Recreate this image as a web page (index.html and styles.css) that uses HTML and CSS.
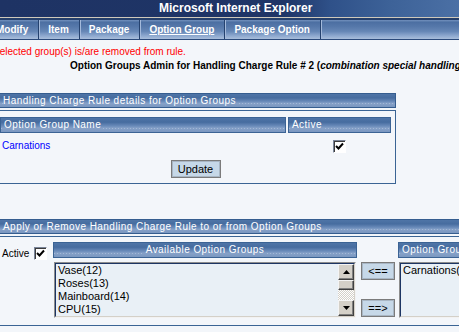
FILE: index.html
```html
<!DOCTYPE html>
<html lang="en">
<head>
<meta charset="utf-8">
<title>Option Groups Admin</title>
<link rel="stylesheet" href="styles.css">
</head>
<body>
<header class="titlebar">Microsoft Internet Explorer</header>
<nav class="nav">
  <a class="nav-item first" href="#">Modify</a><span class="sep"></span>
  <a class="nav-item" href="#">Item</a><span class="sep"></span>
  <a class="nav-item" href="#">Package</a><span class="sep"></span>
  <a class="nav-item current" href="#">Option Group</a><span class="sep"></span>
  <a class="nav-item" href="#">Package Option</a><span class="sep"></span>
</nav>
<main class="content">
  <p class="msg">Selected group(s) is/are removed from rule.</p>
  <h1 class="page-title">Option Groups Admin for Handling Charge Rule # 2 (<em>combination special handling</em>)</h1>

  <section class="panel panel-details">
    <div class="band"><span class="lbl">Handling Charge Rule details for Option Groups</span></div>
    <div class="box">
      <div class="grid grid-head">
        <div class="th"><span class="lbl">Option Group Name</span></div>
        <div class="th"><span class="lbl">Active</span></div>
      </div>
      <div class="grid grid-row">
        <a class="link" href="#">Carnations</a>
        <div class="center"><span class="check"><svg width="9" height="9" viewBox="0 0 9 9"><path d="M1 4 L3.5 6.5 L8 1.5" fill="none" stroke="#000" stroke-width="2"/></svg></span></div>
      </div>
      <div class="actions"><button class="btn btn-update" type="button">Update</button></div>
    </div>
  </section>

  <section class="panel panel-apply">
    <div class="band"><span class="lbl">Apply or Remove Handling Charge Rule to or from Option Groups</span></div>
    <div class="box box-apply">
      <div class="apply-grid">
        <div class="active-cell">Active <span class="check"><svg width="9" height="9" viewBox="0 0 9 9"><path d="M1 4 L3.5 6.5 L8 1.5" fill="none" stroke="#000" stroke-width="2"/></svg></span></div>
        <div class="th th-center"><span class="lbl">Available Option Groups</span></div>
        <div></div>
        <div class="th"><span class="lbl">Option Groups Assigned to this Rule</span></div>

        <div></div>
        <div class="listbox">
          <div class="listbox-inner">
            <ul class="options">
              <li>Vase(12)</li>
              <li>Roses(13)</li>
              <li>Mainboard(14)</li>
              <li>CPU(15)</li>
            </ul>
            <div class="scrollbar">
              <span class="sb-btn"><svg width="7" height="4" viewBox="0 0 7 4"><polygon points="3.5,0 7,4 0,4" fill="#000"/></svg></span>
              <span class="sb-thumb"></span>
              <span class="sb-track"></span>
              <span class="sb-btn"><svg width="7" height="4" viewBox="0 0 7 4"><polygon points="0,0 7,0 3.5,4" fill="#000"/></svg></span>
            </div>
          </div>
        </div>
        <div class="move-btns">
          <button class="btn btn-move" type="button">&lt;==</button>
          <button class="btn btn-move" type="button">==&gt;</button>
        </div>
        <div class="listbox listbox-right">
          <div class="listbox-inner">
            <ul class="options">
              <li>Carnations(11)</li>
            </ul>
          </div>
        </div>
      </div>
    </div>
  </section>
</main>
</body>
</html>
```
FILE: styles.css
```css
html { overflow: hidden; }
body {
  margin: 0;
  background: #f3f6fa;
  font-family: "Liberation Sans", Arial, sans-serif;
  color: #000;
}
* { box-sizing: border-box; }

.titlebar {
  height: 18px;
  border-bottom: 1px solid #cfc9bb;
  background: linear-gradient(to right, #1e3364 0, #1f3567 62%, #2f5189 72%, #3d6298 85%, #4b70a5 100%);
  color: #fff;
  font-weight: bold;
  font-size: 12px;
  line-height: 17px;
  padding-left: 159px;
  white-space: nowrap;
}

.nav {
  display: flex;
  height: 22px;
  border-top: 2px solid #253f6b;
  border-bottom: 1px solid #2b4a7b;
  background: linear-gradient(to bottom, #7391bd 0, #4c6fa2 12%, #5678aa 35%, #6687b6 60%, #8ca7ce 82%, #a9bedb 100%);
  font-size: 10px;
  font-weight: bold;
  line-height: 19px;
  white-space: nowrap;
}
.nav-item {
  color: #fff;
  text-decoration: none;
  padding: 0 10px 0 8px;
}
.nav-item.first { margin-left: -12px; }
.nav-item.current { text-decoration: underline; }
.sep {
  width: 2px;
  flex: none;
  background: linear-gradient(to right, #25426f 50%, #a4badb 50%);
}

.content { padding-top: 6px; }

.msg {
  margin: 0 0 0 -7px;
  color: #ff0000;
  font-size: 10px;
  line-height: 12px;
  white-space: nowrap;
}
.page-title {
  margin: 2px 0 0;
  padding-left: 70px;
  font-size: 10px;
  line-height: 12px;
  font-weight: bold;
  white-space: nowrap;
}

.panel { margin-left: -5px; }
.panel-details { width: 401px; margin-top: 21px; }
.panel-apply { width: 720px; margin-top: 35px; }

.band, .th, .lbl {
  background: linear-gradient(to bottom, #4f75a7 0, #466c9f 30%, #5a7dae 45%, #6b8cba 58%, #86a1c8 72%, #7a97c0 100%);
}
.band, .th {
  position: relative;
  color: #fff;
  font-size: 10px;
  letter-spacing: 0.45px;
  white-space: nowrap;
  overflow: hidden;
}
.band::after, .th::after {
  content: "";
  position: absolute;
  left: 0; right: 0; bottom: 3px;
  height: 1px;
  background: repeating-linear-gradient(to right, #a3b8d6 0 1px, transparent 1px 3px);
}
.lbl {
  position: relative;
  z-index: 1;
  display: inline-block;
  height: 100%;
  padding-right: 2px;
}
.band {
  height: 15px;
  border: 1px solid #355d8f;
  padding-left: 7px;
  line-height: 13px;
}

.box {
  margin-top: 2px;
  border: 1px solid #3a6494;
  padding: 6px 4px 5px;
}

.grid {
  display: grid;
  grid-template-columns: 286px 103px;
  column-gap: 2px;
}
.th {
  height: 16px;
  line-height: 14px;
  padding-left: 3px;
  border: 1px solid #3b6394;
}
.th-center { text-align: center; padding-left: 0; }
.th-center .lbl { padding: 0 2px; }

.grid-row { height: 26px; align-items: center; }
.link {
  color: #0000ff;
  text-decoration: none;
  font-size: 10px;
  line-height: 12px;
  padding-left: 2px;
}
.center { text-align: center; line-height: 0; }

.check {
  display: inline-flex;
  align-items: center;
  justify-content: center;
  width: 13px;
  height: 13px;
  border: 1px solid;
  border-color: #7a8599 #ffffff #ffffff #7a8599;
  box-shadow: inset 1px 1px 0 #3c3c3c;
  background: #fff;
  vertical-align: middle;
}

.actions { text-align: center; margin-top: 1px; line-height: 0; }
.btn {
  font-family: "Liberation Sans", Arial, sans-serif;
  font-size: 11px;
  color: #000;
  background: #c6d8e8;
  border: 1px solid #7b7b7b;
  box-shadow: inset 0 0 0 1px #a8b6c4;
  padding: 0;
  height: 18px;
  line-height: 15px;
}
.btn-update { width: 50px; }

.box-apply { padding: 5px 4px 7px; }
.apply-grid {
  display: grid;
  grid-template-columns: 53px 304px 41px 320px;
  grid-template-rows: 16px 56px;
  row-gap: 4px;
}
.active-cell {
  display: flex;
  align-items: center;
  gap: 5px;
  padding: 5px 0 0 2px;
  font-size: 10px;
  line-height: 12px;
  height: 18px;
}

.listbox {
  margin: 0 1px;
  border: 1px solid;
  border-color: #8d8d8d #f2f2f2 #f2f2f2 #8d8d8d;
  height: 56px;
}
.listbox-inner {
  display: flex;
  height: 100%;
  border: 1px solid;
  border-color: #1d3563 #d4d0c8 #d4d0c8 #1d3563;
  background: #e9f0f6;
}
.options {
  flex: 1;
  list-style: none;
  margin: 0;
  padding: 0 0 0 2px;
  font-size: 11px;
  line-height: 13px;
  white-space: nowrap;
  overflow: hidden;
}
.scrollbar {
  width: 16px;
  display: flex;
  flex-direction: column;
}
.sb-btn, .sb-thumb {
  display: flex;
  align-items: center;
  justify-content: center;
  background: #d4d0c8;
  border: 1px solid;
  border-color: #f4f4f4 #404040 #404040 #f4f4f4;
  box-shadow: inset -1px -1px 0 #808080;
}
.sb-btn { height: 16px; }
.sb-thumb { height: 10px; }
.sb-track {
  flex: 1;
  background: repeating-conic-gradient(#d4d0c8 0 25%, #ffffff 0 50%) 0 0 / 2px 2px;
}

.move-btns {
  display: flex;
  flex-direction: column;
  justify-content: space-between;
  padding: 0 0 1px 4px;
}
.btn-move { width: 34px; }

.listbox-right { margin-right: 0; }
```
